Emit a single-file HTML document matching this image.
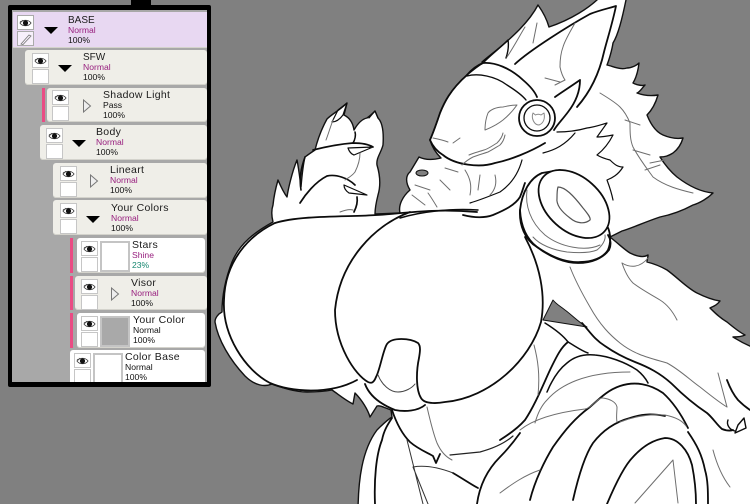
<!DOCTYPE html>
<html><head><meta charset="utf-8">
<style>
html,body{margin:0;padding:0}
body{width:750px;height:504px;overflow:hidden;background:#808080;position:relative;font-family:"Liberation Sans",Arial,sans-serif}
#art{position:absolute;left:0;top:0;filter:blur(.3px)}
#tab{position:absolute;left:131px;top:0;width:20px;height:6px;background:#000}
#panel{position:absolute;left:8px;top:5px;width:195px;height:372px;border:4px solid #000;border-top-width:5px;border-bottom-width:5px;background:#a8a8a8;border-radius:2px;overflow:hidden}
#in{position:absolute;left:-12px;top:-10px;width:220px;height:400px;filter:blur(.25px)}
.r{position:absolute;background:#efeee8;border-radius:3px;box-shadow:inset 0 -1px 0 #d4d3cc}
.w{background:#fff}
.p{background:#e8d8f2;border-radius:0}
.b{position:absolute;width:3px;background:#ea4c84}
.e,.x{position:absolute;width:15px;height:13px;border:1px solid #c6c6c6;background:#fff}
.e svg{position:absolute;left:1px;top:2px}
.th{position:absolute;width:26px;height:27px;border:2px solid #c4c4c4;background:#fff}
.t{position:absolute;font-size:8.6px;line-height:10px;color:#111;white-space:nowrap;margin-top:1px}
.t b{display:block;font-weight:normal;font-size:10.5px;letter-spacing:.3px;line-height:9px;height:9px;color:#1b1b1b}
.t b.c{font-size:10px;letter-spacing:0}
.t i{display:block;font-style:normal;color:#98207f}
.t u{display:block;text-decoration:none;color:#15866f}
.d,.o{position:absolute}
</style></head><body>
<svg id="art" width="750" height="504" viewBox="0 0 750 504" fill="none" stroke-linecap="round" stroke-linejoin="round">
<defs><symbol id="eye" viewBox="0 0 14 10"><path d="M1 5C4 1 10 1 13 5C10 9 4 9 1 5Z" fill="#fff" stroke="#333" stroke-width=".8"/><circle cx="7" cy="5" r="2.8" fill="#111"/><path d="M1 3L3 4M3 1.8L4.5 3" stroke="#333" stroke-width=".7"/></symbol></defs>
<path fill="#fff" stroke="#111" stroke-width="1.4" d="M273 222C271 214 272 208 273 205C274 195 276 187 278 180C281 187 284 193 287 197C288 190 292 172 297 160C299 170 300 180 301 187C302 175 303 165 305 157C309 154 312 152 315 150C318 138 322 128 327 119C332 114 340 110 347 103L344 115C350 118 353 123 354 130C358 123 362 119 367 118C370 116 373 113 375 111L378 118C382 122 384 130 383 145C381 153 376 158 377 165C380 175 381 185 378 195C376 203 375 208 375 214L400 213C398 205 403 196 410 190C405 182 406 175 410 172L419 157C425 160 433 160 441 158C436 153 432 147 430 140C433 133 437 122 440 113C444 103 450 90 467 75C473 70 478 66 483 63C495 50 525 30 538 5C543 12 547 20 549 27C570 20 590 8 602 -5L627 -5C622 20 618 35 613 43C612 50 609 60 607 65C615 67 621 70 627 68C632 68 637 65 639 63C638 72 636 78 633 83C637 85 642 86 645 85C642 88 640 92 637 93C645 96 652 96 658 95C656 102 652 110 647 115C651 125 656 132 663 135C670 138 677 139 683 138C681 145 677 150 673 153C668 156 665 157 660 157C665 165 671 172 677 177C690 187 702 192 713 193C708 198 700 203 693 205C680 212 670 215 660 217C645 222 632 228 622 231L610 237C620 245 625 250 630 253C636 256 643 258 648 255C648 258 647 260 647 262C655 264 660 266 667 270C678 278 687 288 697 293C705 297 713 300 720 301C717 305 714 306 710 308C715 313 720 318 727 322C733 327 739 332 745 335C741 337 737 337 733 337C738 340 745 345 760 350L760 514L358 514C358 480 362 450 377 430C382 425 387 420 392 417L391 410C385 408 380 405 377 406L370 417C368 410 362 400 355 393L353 404C345 400 338 394 332 390C322 392 315 392 307 392C295 392 283 388 272 384C265 387 255 386 245 376C230 360 218 340 215 322C215 318 218 314 222 312C222 295 225 280 232 262C240 243 255 232 273 222Z"/>
<!-- gray gaps -->
<path fill="#808080" stroke="#111" stroke-width="1" d="M553 300L543 320L587 327C578 322 572 315 565 310C560 306 556 304 553 300Z"/>
<ellipse cx="422" cy="173" rx="6" ry="3" fill="#808080" stroke="#111" stroke-width="1"/>
<!-- dark lines -->
<g stroke="#0c0c0c" stroke-width="1.8">
<path d="M275 223C250 235 225 260 224 300C222 335 245 370 270 383C290 392 330 395 357 380"/>
<path d="M275 223C300 215 350 217 377 215C400 214 430 208 477 212"/>
<path d="M410 212C375 225 340 260 335 310C335 345 355 375 368 382C372 384 374 382 376 377C380 370 383 350 387 344C392 337 410 338 418 343C421 346 420 352 419 358C416 372 416 390 421 398C425 405 440 403 445 402C490 398 530 360 541 322C546 295 540 265 525 237"/>
<path d="M365 384C368 392 375 402 395 410C405 412 418 411 425 405"/>
<path d="M392 410C397 425 403 435 410 442C418 449 428 453 433 456L436 463L440 454"/>
<path d="M375 504C374 480 376 455 382 440C384 430 388 424 392 418"/>
<!-- head -->
<path d="M430 140C433 133 437 122 440 113C444 103 450 90 467 75"/>
<path d="M430 140C433 147 438 152 443 155C455 165 480 168 495 163C510 160 530 152 545 143"/>
<path d="M467 75C473 68 478 65 483 63C495 62 510 68 523 80C530 86 535 92 537 97"/>
<path d="M467 76C478 73 495 76 507 85C515 90 522 95 526 100" stroke-width="1.4"/>
<circle cx="537" cy="118" r="18" fill="#fff"/>
<circle cx="537" cy="118" r="13" stroke-width="1.3"/>
<path d="M533 113L535.5 115C537 114 539.5 114 541 115L544 113C545 118 544 123 539 125C534 125 531 118 533 113Z" stroke="#888" stroke-width="1"/>
<!-- ear -->
<path d="M515 64C530 50 570 25 590 14C600 10 610 8 616 6C612 25 607 40 604 52C600 70 592 90 577 107"/>
<path d="M580 80C570 87 562 92 555 97M580 80C580 92 575 103 568 112C562 120 557 125 554 130"/>
<path d="M482 62C490 55 500 48 508 40C509 46 508 52 506 58" stroke-width="1.4"/>
<!-- neck fur -->
<path d="M400 218C420 212 450 208 478 210" stroke-width="1.5"/>
<path d="M463 215C475 218 485 218 493 215C505 210 515 205 520 197C523 190 524 185 525 183"/>
<path d="M470 203C480 200 490 196 500 192C510 185 518 175 522 160" stroke-width="1.2"/>
<path d="M543 153C555 150 565 145 575 133" stroke-width="1.2"/>
<path d="M557 132C570 132 580 130 587 128C595 127 600 125 607 123L597 137C602 137 608 136 613 135C608 145 602 151 597 155C602 158 606 159 610 160C615 165 618 167 623 167C618 175 612 178 607 180C610 188 612 195 613 200" stroke-width="1.2"/>
<!-- big disc -->
<path fill="#fff" d="M542 173C530 178 522 192 520 210C519 225 525 240 537 247C550 256 565 263 580 262C592 262 603 258 608 250C612 240 610 230 606 224L560 170Z"/>
<ellipse cx="574" cy="204" rx="41" ry="27" transform="rotate(42 574 204)" fill="#fff"/>
<path d="M520 210C521 228 528 240 537 247C550 257 565 263 578 263C592 263 603 258 609 250C612 244 610 238 608 235"/>
<!-- body stripes -->
<path d="M545 323C553 328 562 334 568 342C575 346 582 351 588 353" stroke-width="1.5"/>
<path d="M568 342C560 348 555 360 550 370C543 385 535 405 525 420C518 428 508 435 500 440"/>
<path d="M582 323C590 332 595 340 605 346C615 353 625 358 635 362C648 367 660 373 672 384C682 394 695 405 707 413C713 418 717 425 722 429C727 431 730 431 733 430"/>
<path d="M547 392C552 380 558 370 567 363C575 356 585 354 595 355C608 356 625 362 637 370C642 374 646 379 648 383" stroke-width="1.5"/>
<path d="M530 500C535 480 545 460 553 447C565 430 575 418 590 407C600 398 608 390 620 386C635 381 650 384 663 393C673 402 682 416 688 428"/>
<path d="M573 500C578 478 585 455 593 443C603 430 615 422 630 418C645 413 655 414 665 416"/>
<path d="M688 432C697 445 702 455 705 470C708 480 708 492 708 504"/>
<path d="M607 504C615 485 625 465 633 457C642 447 652 440 665 438C678 438 688 450 692 465C695 480 696 492 696 504"/>
<path d="M477 504C480 482 490 467 500 457C507 450 515 440 520 433"/>
<path d="M453 473C465 480 472 485 478 488"/>
<path d="M727 380C730 388 733 394 738 400C743 405 747 408 750 410"/>
<path d="M728 420C726 425 730 430 735 431M738 425L735 433L746 428L744 418Z" stroke-width="1.4"/>
<!-- hand -->
<path d="M313 150C325 147 340 144 353 143C360 143 368 144 373 147" stroke-width="1.7"/>
<path d="M355 132C356 135 355 140 353 143" stroke-width="1.5"/>
<path d="M305 157C301 168 299 178 301 190" stroke-width="1.6"/>
<path d="M300 203C305 195 315 182 327 176C336 174 348 178 355 185M357 197C358 203 356 208 354 212" stroke-width="1.7"/>
<path d="M348 148L373 147L354 155C351 154 349 151 348 148Z" stroke-width="1.2"/>
<path d="M344 185L367 195L349 193C346 191 344 188 344 185Z" stroke-width="1.2"/>
<path d="M332 122L338 110L347 103L343 115C340 119 336 122 332 122Z" stroke-width="1.2"/>
<path d="M369 118L375 111L378 118" stroke-width="1.2"/>
</g>
<!-- gray thin lines -->
<g stroke="#6e6e6e" stroke-width="1">
<path d="M378 375C382 385 390 392 398 392C405 392 412 388 415 384" stroke="#444"/>
<path d="M427 407C430 420 433 433 437 443C441 452 446 457 452 460"/>
<path d="M450 455C460 454 470 453 480 452C495 448 505 443 513 436" stroke="#222" stroke-width="1.2"/>
<path d="M407 440L423 504M413 467C425 465 440 468 453 473M413 467L428 504" stroke="#333"/>
<path d="M534 345C538 360 540 375 538 395"/>
<path d="M535 423C538 412 542 405 547 400C560 385 585 372 630 372"/>
<path d="M520 430C535 418 560 412 585 409C592 408 598 397 603 398C610 399 616 402 617 407C617 412 616 417 617 422"/>
<path d="M620 422C635 416 650 414 665 415C675 417 682 420 686 426"/>
<path d="M635 503L673 460L678 503"/>
<path d="M500 493C512 484 525 475 540 470"/>
<path d="M713 450C717 465 723 478 730 487"/>
<path d="M570 267C575 280 583 295 590 307C600 325 610 335 620 343C635 355 650 358 667 363C680 370 690 380 700 387C710 395 720 403 727 407"/>
<path d="M718 373L727 407"/>
<path d="M622 263C625 272 628 278 633 283C642 290 652 295 660 300C668 305 673 312 677 320"/>
<path d="M622 263C630 268 640 268 648 258"/>
<path d="M600 93C608 98 615 102 620 107C625 112 628 118 630 123C630 132 630 140 633 147C640 160 648 170 653 177C665 186 680 190 693 193"/>
<path d="M625 120L640 125M633 150L650 155M645 170L660 165M650 163L665 160"/>
<path d="M575 23C570 32 565 40 563 47C560 55 560 62 560 67C561 72 563 77 565 80"/>
<path d="M545 78L560 82M555 85L565 80"/>
<path d="M488 113C490 110 496 107 503 107C508 106 512 105 517 105C512 112 508 116 503 120C498 124 490 128 485 130C485 125 486 118 488 113Z"/>
<path d="M505 135C504 140 502 143 500 145C495 148 492 150 488 152C482 154 478 155 473 157C469 159 465 162 462 165"/>
<path d="M503 133C502 138 499 141 497 143C492 146 488 149 484 150C478 152 473 153 469 155"/>
<path d="M453 143L460 138M433 138C438 139 443 140 448 142"/>
<path d="M428 193C431 197 434 202 437 207M440 180L450 190M465 170C470 178 472 185 470 195M480 175L478 190M495 175C497 183 495 190 490 195"/>
<path d="M412 195L425 205M415 185L430 190M445 168L458 172"/>
<path d="M507 57C515 45 520 35 525 27M533 43L537 23"/>
<path d="M558 187C565 187 573 195 583 208C588 214 591 218 590 220C585 224 577 224 570 218C562 212 556 205 557 198C557 193 557 190 558 187Z" stroke="#555" stroke-width="1.2"/>
<path d="M533 237C540 245 553 250 567 252C578 253 590 253 597 250C602 246 606 240 605 235"/>
<path d="M527 190C525 205 530 222 545 235C560 247 585 252 600 245"/>
<path d="M360 153C360 160 358 166 355 172C352 176 348 178 345 180"/>
<path d="M333 120C330 128 328 135 326 140"/>
<path d="M340 212C345 210 350 209 353 210"/>
</g>
</svg>
<div id="tab"></div>
<div id="panel"><div id="in">
<div class="r p" style="left:13px;top:12px;width:194px;height:36px"></div>
<div class="e" style="left:17px;top:15px;border-color:#aaa"><svg width="13" height="10"><use href="#eye"/></svg></div>
<div class="x" style="left:17px;top:31px;background:#f7f0fb;border-color:#aaa"><svg width="15" height="13" style="position:absolute;left:0;top:0"><path d="M3 12L11 3L13 4L5 12.5Z" fill="none" stroke="#777" stroke-width=".8"/></svg></div>
<div class="d" style="left:44px;top:27px;border-left:7px solid transparent;border-right:7px solid transparent;border-top:7px solid #000"></div>
<div class="t" style="left:68px;top:15px"><b class="c">BASE</b><i>Normal</i>100%</div>

<div class="r" style="left:25px;top:50px;width:182px;height:35px"></div>
<div class="e" style="left:32px;top:53px"><svg width="13" height="10"><use href="#eye"/></svg></div>
<div class="x" style="left:32px;top:69px"></div>
<div class="d" style="left:58px;top:65px;border-left:7px solid transparent;border-right:7px solid transparent;border-top:7px solid #000"></div>
<div class="t" style="left:83px;top:52px"><b class="c">SFW</b><i>Normal</i>100%</div>

<div class="b" style="left:42px;top:88px;height:34px"></div>
<div class="r" style="left:47px;top:88px;width:160px;height:34px"></div>
<div class="e" style="left:52px;top:90px"><svg width="13" height="10"><use href="#eye"/></svg></div>
<div class="x" style="left:52px;top:106px"></div>
<svg class="o" style="left:82px;top:99px" width="10" height="14"><path d="M1.5 1L8.5 7L1.5 13Z" fill="#eee" stroke="#777"/></svg>
<div class="t" style="left:103px;top:90px"><b>Shadow Light</b>Pass<br>100%</div>

<div class="r" style="left:40px;top:125px;width:167px;height:35px"></div>
<div class="e" style="left:46px;top:128px"><svg width="13" height="10"><use href="#eye"/></svg></div>
<div class="x" style="left:46px;top:144px"></div>
<div class="d" style="left:72px;top:140px;border-left:7px solid transparent;border-right:7px solid transparent;border-top:7px solid #000"></div>
<div class="t" style="left:96px;top:127px"><b>Body</b><i>Normal</i>100%</div>

<div class="r" style="left:53px;top:163px;width:154px;height:35px"></div>
<div class="e" style="left:60px;top:166px"><svg width="13" height="10"><use href="#eye"/></svg></div>
<div class="x" style="left:60px;top:182px"></div>
<svg class="o" style="left:89px;top:174px" width="10" height="14"><path d="M1.5 1L8.5 7L1.5 13Z" fill="#eee" stroke="#777"/></svg>
<div class="t" style="left:110px;top:165px"><b>Lineart</b><i>Normal</i>100%</div>

<div class="r" style="left:53px;top:200px;width:154px;height:35px"></div>
<div class="e" style="left:60px;top:203px"><svg width="13" height="10"><use href="#eye"/></svg></div>
<div class="x" style="left:60px;top:219px"></div>
<div class="d" style="left:86px;top:216px;border-left:7px solid transparent;border-right:7px solid transparent;border-top:7px solid #000"></div>
<div class="t" style="left:111px;top:203px"><b>Your Colors</b><i>Normal</i>100%</div>

<div class="b" style="left:70px;top:238px;height:35px"></div>
<div class="r w" style="left:77px;top:238px;width:128px;height:35px"></div>
<div class="e" style="left:81px;top:241px"><svg width="13" height="10"><use href="#eye"/></svg></div>
<div class="x" style="left:81px;top:257px"></div>
<div class="th" style="left:100px;top:241px"></div>
<div class="t" style="left:132px;top:240px"><b>Stars</b><i>Shine</i><u>23%</u></div>

<div class="b" style="left:70px;top:276px;height:34px"></div>
<div class="r" style="left:75px;top:276px;width:132px;height:34px"></div>
<div class="e" style="left:81px;top:279px"><svg width="13" height="10"><use href="#eye"/></svg></div>
<div class="x" style="left:81px;top:295px"></div>
<svg class="o" style="left:110px;top:287px" width="10" height="14"><path d="M1.5 1L8.5 7L1.5 13Z" fill="#eee" stroke="#777"/></svg>
<div class="t" style="left:131px;top:278px"><b>Visor</b><i>Normal</i>100%</div>

<div class="b" style="left:70px;top:313px;height:35px"></div>
<div class="r w" style="left:77px;top:313px;width:128px;height:35px"></div>
<div class="e" style="left:81px;top:316px"><svg width="13" height="10"><use href="#eye"/></svg></div>
<div class="x" style="left:81px;top:332px"></div>
<div class="th" style="left:100px;top:316px;background:#a9a9a9"></div>
<div class="t" style="left:133px;top:315px"><b>Your Color</b>Normal<br>100%</div>

<div class="r w" style="left:70px;top:350px;width:135px;height:40px"></div>
<div class="e" style="left:74px;top:353px"><svg width="13" height="10"><use href="#eye"/></svg></div>
<div class="x" style="left:74px;top:369px"></div>
<div class="th" style="left:93px;top:353px"></div>
<div class="t" style="left:125px;top:352px"><b>Color Base</b>Normal<br>100%</div>
</div></div>
</body></html>
